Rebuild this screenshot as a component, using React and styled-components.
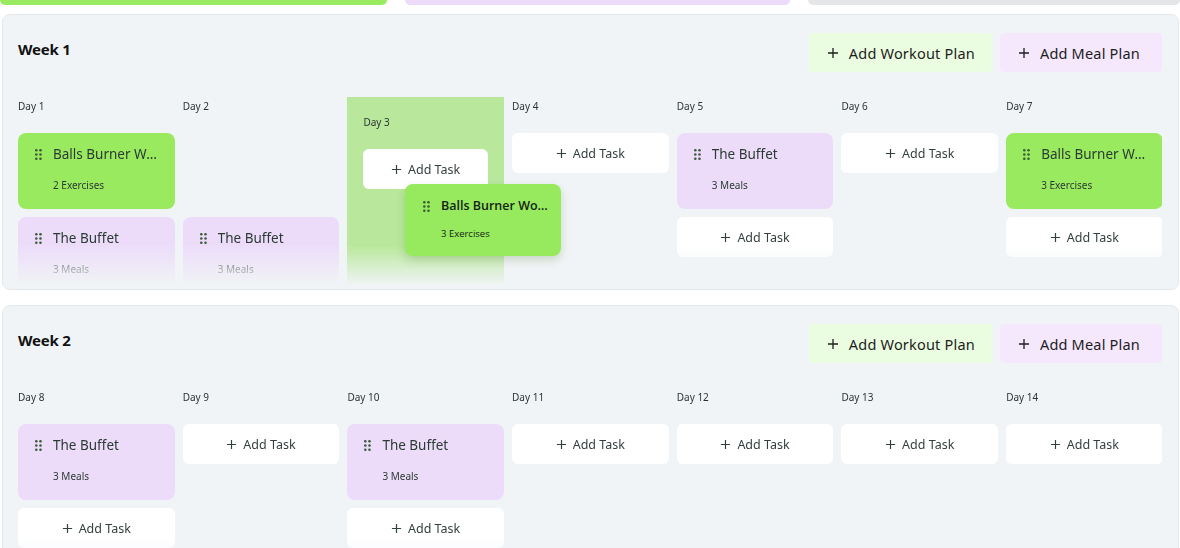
import React from 'react';
import styled, { createGlobalStyle } from 'styled-components';

const GlobalStyle = createGlobalStyle`
  html, body {
    margin: 0;
    padding: 0;
    background: #fff;
    font-family: "Noto Sans", "Open Sans", sans-serif;
    overflow: hidden;
  }
  * { box-sizing: border-box; }
`;

const Page = styled.div`
  width: 1180px;
  height: 548px;
  overflow: hidden;
`;

const TabStrip = styled.div`
  display: grid;
  grid-template-columns: 387px 385px 1fr;
  gap: 18px;
  height: 5px;
`;

const Tab = styled.div`
  background: ${(p) => p.$color};
  border-radius: 0 0 8px 8px;
`;

const WeekPanel = styled.section`
  margin: ${(p) => (p.$first ? '9px' : '15px')} 1px 0 2px;
  background: #f1f4f6;
  border: 1px solid #e4e8ea;
  border-radius: 8px;
  padding: 18px 16px 4px 15px;
`;

const WeekHeader = styled.div`
  display: flex;
  align-items: center;
  justify-content: space-between;
  margin-bottom: 25px;
`;

const WeekTitle = styled.h2`
  margin: 0 0 7px;
  font-size: 15px;
  font-weight: 700;
  color: #121212;
  letter-spacing: -0.2px;
`;

const PlanActions = styled.div`
  display: flex;
  gap: 8px;
`;

const PlanButton = styled.button`
  display: flex;
  align-items: center;
  gap: 10px;
  height: 39px;
  padding: 0 ${(p) => (p.$kind === 'meal' ? '22px' : '17px')} 0 18px;
  border: none;
  border-radius: 4px;
  background: ${(p) => (p.$kind === 'meal' ? '#f5e8fd' : '#ebfde1')};
  color: #1d1d1d;
  font-family: inherit;
  font-size: 14.5px;
  letter-spacing: 0.2px;
  cursor: pointer;
`;

const Board = styled.div`
  position: relative;
`;

const DayRow = styled.div`
  display: grid;
  grid-template-columns: repeat(7, 156.5px);
  column-gap: 8.2px;
  height: 188px;
  overflow: hidden;
  mask-image: linear-gradient(to bottom, #000 79%, transparent 100%);
  -webkit-mask-image: linear-gradient(to bottom, #000 79%, transparent 100%);
`;

const DayColumn = styled.div`
  display: flex;
  flex-direction: column;
  gap: 8px;
  padding: ${(p) => (p.$over ? '16px' : '0')};
  background: ${(p) => (p.$over ? '#b9e89c' : 'transparent')};
`;

const DayLabel = styled.div`
  font-size: 10px;
  line-height: 18px;
  color: #2b3434;
  margin-bottom: 10px;
`;

const TaskCard = styled.div`
  display: grid;
  grid-template-columns: 10px 1fr;
  column-gap: 8px;
  align-content: start;
  height: 76px;
  flex-shrink: 0;
  padding: 12px 10px 0 17px;
  border-radius: 8px;
  background: ${(p) => (p.$kind === 'meal' ? '#ecdcfa' : '#9aea60')};
  visibility: ${(p) => (p.$hidden ? 'hidden' : 'visible')};
`;

const CardTitle = styled.div`
  font-size: 13.5px;
  line-height: 18px;
  color: #2c3a34;
  white-space: nowrap;
  overflow: hidden;
  text-overflow: ellipsis;
`;

const CardMeta = styled.div`
  grid-column: 2;
  margin-top: 15px;
  font-size: 10px;
  line-height: 14px;
  color: #2c3a34;
`;

const HandleWrap = styled.div`
  display: flex;
  align-items: center;
  height: 18px;
  color: #3d5a3a;
`;

const AddTaskButton = styled.button`
  display: flex;
  align-items: center;
  justify-content: center;
  gap: 6px;
  height: 40px;
  flex-shrink: 0;
  border: none;
  border-radius: 6px;
  background: #fff;
  color: #34403f;
  font-family: inherit;
  font-size: 12.5px;
  cursor: pointer;
`;

const DragOverlay = styled.div`
  position: absolute;
  left: 387px;
  top: 87px;
  width: 156px;
  height: 72px;
  display: grid;
  grid-template-columns: 10px 1fr;
  column-gap: 8px;
  align-content: start;
  padding: 13px 10px 0 18px;
  border-radius: 8px;
  background: #97ea5e;
  box-shadow: 0 4px 10px rgba(60, 110, 30, 0.22);
  font-family: "Open Sans", "Noto Sans", sans-serif;
`;

const OverlayTitle = styled.div`
  font-size: 12.5px;
  font-weight: 600;
  line-height: 18px;
  color: #142414;
  white-space: nowrap;
  overflow: hidden;
  text-overflow: ellipsis;
`;

const OverlayMeta = styled.div`
  grid-column: 2;
  margin-top: 12px;
  font-size: 9.5px;
  line-height: 14px;
  color: #142414;
`;

function Plus({ size = 12 }) {
  return (
    <svg width={size} height={size} viewBox="0 0 12 12" fill="none" stroke="currentColor" strokeWidth="1.3">
      <path d="M6 1v10M1 6h10" />
    </svg>
  );
}

function Handle() {
  return (
    <svg width="7" height="11" viewBox="0 0 7 11" fill="currentColor">
      <circle cx="1.3" cy="1.3" r="1.3" />
      <circle cx="5.5" cy="1.3" r="1.3" />
      <circle cx="1.3" cy="5.5" r="1.3" />
      <circle cx="5.5" cy="5.5" r="1.3" />
      <circle cx="1.3" cy="9.7" r="1.3" />
      <circle cx="5.5" cy="9.7" r="1.3" />
    </svg>
  );
}

function Task({ kind, title, meta, hidden }) {
  return (
    <TaskCard $kind={kind} $hidden={hidden}>
      <HandleWrap><Handle /></HandleWrap>
      <CardTitle>{title}</CardTitle>
      <CardMeta>{meta}</CardMeta>
    </TaskCard>
  );
}

function AddTask() {
  return (
    <AddTaskButton>
      <Plus size={11} /> Add Task
    </AddTaskButton>
  );
}

const workout = (n) => ({ kind: 'workout', title: 'Balls Burner Workout', meta: `${n} Exercises` });
const meal = { kind: 'meal', title: 'The Buffet', meta: '3 Meals' };

const weeks = [
  {
    name: 'Week 1',
    days: [
      { n: 1, tasks: [workout(2), meal] },
      { n: 2, tasks: [{ ...workout(3), hidden: true }, meal] },
      { n: 3, tasks: [], over: true },
      { n: 4, tasks: [] },
      { n: 5, tasks: [meal] },
      { n: 6, tasks: [] },
      { n: 7, tasks: [workout(3)] },
    ],
    dragging: true,
  },
  {
    name: 'Week 2',
    days: [
      { n: 8, tasks: [meal] },
      { n: 9, tasks: [] },
      { n: 10, tasks: [meal] },
      { n: 11, tasks: [] },
      { n: 12, tasks: [] },
      { n: 13, tasks: [] },
      { n: 14, tasks: [] },
    ],
  },
];

function Week({ week, first }) {
  return (
    <WeekPanel $first={first}>
      <WeekHeader>
        <WeekTitle>{week.name}</WeekTitle>
        <PlanActions>
          <PlanButton $kind="workout"><Plus size={12} /> Add Workout Plan</PlanButton>
          <PlanButton $kind="meal"><Plus size={12} /> Add Meal Plan</PlanButton>
        </PlanActions>
      </WeekHeader>
      <Board>
        <DayRow>
          {week.days.map((d) => (
            <DayColumn key={d.n} $over={d.over}>
              <DayLabel>Day {d.n}</DayLabel>
              {d.tasks.map((t, i) => (
                <Task key={i} {...t} />
              ))}
              <AddTask />
            </DayColumn>
          ))}
        </DayRow>
        {week.dragging && (
          <DragOverlay>
            <HandleWrap><Handle /></HandleWrap>
            <OverlayTitle>Balls Burner Workout</OverlayTitle>
            <OverlayMeta>3 Exercises</OverlayMeta>
          </DragOverlay>
        )}
      </Board>
    </WeekPanel>
  );
}

export default function App() {
  return (
    <Page>
      <GlobalStyle />
      <TabStrip>
        <Tab $color="#9aea60" />
        <Tab $color="#ecdcfa" />
        <Tab $color="#e5e6e8" />
      </TabStrip>
      {weeks.map((w, i) => (
        <Week key={w.name} week={w} first={i === 0} />
      ))}
    </Page>
  );
}
